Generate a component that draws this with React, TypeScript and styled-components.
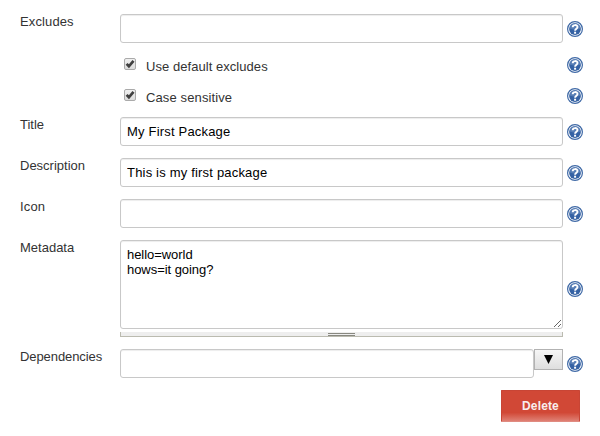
import React from 'react';
import styled, { createGlobalStyle } from 'styled-components';

const GlobalStyle = createGlobalStyle`
  *, *::before { box-sizing: border-box; }
  body {
    margin: 0;
    background: #fff;
    color: #333;
    font: 13px/15px "Liberation Sans", Arial, sans-serif;
  }
`;

const Form = styled.form`
  display: flex;
  flex-direction: column;
  gap: 12px;
  width: 600px;
  height: 436px;
  padding: 14px 17px 0 20px;
  overflow: hidden;
`;

const Row = styled.div`
  display: grid;
  grid-template-columns: 100px 443px 20px;
  align-items: start;
`;

const Label = styled.label<{ $spacing?: number }>`
  letter-spacing: ${(p) => p.$spacing ?? 0}px;
  white-space: nowrap;
`;

const TextInput = styled.input`
  display: block;
  width: 100%;
  min-width: 0;
  height: 29px;
  margin: 0;
  padding: 0 6px 1px;
  border: 1px solid #c8c8c8;
  border-radius: 3px;
  background: #fff;
  box-shadow: inset 0 1px 1px rgba(0, 0, 0, 0.075);
  color: #000;
  font: inherit;
  letter-spacing: 0.19px;
  outline: none;
`;

const TextArea = styled.textarea`
  display: block;
  width: 100%;
  height: 89px;
  padding: 6px;
  border: 1px solid #c8c8c8;
  border-radius: 3px;
  box-shadow: inset 0 1px 1px rgba(0, 0, 0, 0.075);
  color: #000;
  font: inherit;
  letter-spacing: -0.05px;
  resize: vertical;
  outline: none;
`;

const Grip = styled.div`
  display: flex;
  justify-content: center;
  height: 5px;
  margin-top: 3px;
  border: solid #bbbbb0;
  border-width: 0 1px 1px;
  background: #eee;
  &::before {
    content: '';
    width: 27px;
    height: 3px;
    margin-top: 1px;
    border: solid #888880;
    border-width: 1px 0;
  }
`;

const HelpLink = styled.a<{ $top: number }>`
  display: block;
  width: 16px;
  height: 16px;
  margin: ${(p) => p.$top}px 0 0 4px;
`;

const Checks = styled.div`
  display: flex;
  flex-direction: column;
  height: 50px;
`;

const CheckRow = styled(Row)`
  height: 31px;
  flex: none;
`;

const CheckLabel = styled.label<{ $spacing: number }>`
  display: flex;
  grid-column: 2;
  padding: 3px 0 0 4px;
  letter-spacing: ${(p) => p.$spacing}px;
`;

const CheckBox = styled.span`
  width: 12px;
  height: 12px;
  margin-right: 10px;
  border: 1px solid #aaa;
  border-radius: 2px;
  background: linear-gradient(#f0f0f0, #dcdcdc);
  svg { display: block; overflow: visible; }
`;

const CheckText = styled.span`
  padding-top: 1px;
`;

const Combo = styled.div`
  display: flex;
  & > input { width: 414px; }
`;

const DropButton = styled.button`
  display: flex;
  justify-content: center;
  width: 29px;
  height: 21px;
  padding: 5px 0 0;
  border: 1px solid #b2b2b2;
  background: linear-gradient(#f6f6f6, #dedede);
`;

const Actions = styled.div`
  display: flex;
  justify-content: flex-end;
  padding-right: 3px;
`;

const DeleteButton = styled.button`
  width: 79px;
  height: 32px;
  padding: 0;
  border: 1px solid #c84535;
  border-bottom-color: #e08b81;
  border-radius: 1px;
  background: linear-gradient(#d14836 0, #d14836 72%, #df8074 100%);
  color: #f8eeee;
  font: bold 12px/16px "Liberation Sans", Arial, sans-serif;
  letter-spacing: 0.15px;
`;

function Help({ top = 7 }: { top?: number }) {
  return (
    <HelpLink $top={top} aria-label="Help">
      <svg width="16" height="16" viewBox="0 0 16 16" fill="none">
        <circle cx="8" cy="8" r="7.4" fill="#fff" stroke="#3f69a6" strokeWidth="1.2" />
        <circle cx="8" cy="8" r="5.9" fill="#3562a4" />
        <path d="M2.6 7.5a5.4 5.4 0 0 1 10.8 0C11 9 6 9 2.6 7.5Z" fill="#7797c6" opacity=".5" />
        <path d="M5.7 6.2C5.7 3.4 10.5 3.4 10.5 6C10.5 7.7 8.1 7.7 8.1 9.8" stroke="#fff" strokeWidth="1.9" />
        <path d="M7.1 10.7h2v2h-2z" fill="#fff" />
      </svg>
    </HelpLink>
  );
}

function Check({ text, spacing }: { text: string; spacing: number }) {
  return (
    <CheckRow>
      <CheckLabel $spacing={spacing}>
        <CheckBox role="checkbox" aria-checked="true">
          <svg width="10" height="10" viewBox="0 0 10 10" fill="none">
            <path d="M1.6 4.9l2.3 2.4L8.5 1.8" stroke="#404040" strokeWidth="2.7" />
          </svg>
        </CheckBox>
        <CheckText>{text}</CheckText>
      </CheckLabel>
      <Help top={2} />
    </CheckRow>
  );
}

function Field({ label, value = '', spacing }: { label: string; value?: string; spacing?: number }) {
  return (
    <Row>
      <Label $spacing={spacing}>{label}</Label>
      <TextInput aria-label={label} defaultValue={value} />
      <Help />
    </Row>
  );
}

export default function App() {
  return (
    <>
      <GlobalStyle />
      <Form>
        <Field label="Excludes" spacing={0.12} />
        <Checks>
          <Check text="Use default excludes" spacing={0.05} />
          <Check text="Case sensitive" spacing={0.12} />
        </Checks>
        <Field label="Title" value="My First Package" />
        <Field label="Description" value="This is my first package" />
        <Field label="Icon" spacing={0.15} />
        <Row>
          <Label>Metadata</Label>
          <div>
            <TextArea aria-label="Metadata" defaultValue={'hello=world\nhows=it going?'} spellCheck={false} />
            <Grip />
          </div>
          <Help top={41} />
        </Row>
        <Row>
          <Label $spacing={-0.08}>Dependencies</Label>
          <Combo>
            <TextInput aria-label="Dependencies" />
            <DropButton type="button" aria-label="Show dependencies">
              <svg width="9" height="9" viewBox="0 0 9 9">
                <path d="M0 0h9L4.5 9z" fill="#000" />
              </svg>
            </DropButton>
          </Combo>
          <Help />
        </Row>
        <Actions>
          <DeleteButton type="button">Delete</DeleteButton>
        </Actions>
      </Form>
    </>
  );
}
